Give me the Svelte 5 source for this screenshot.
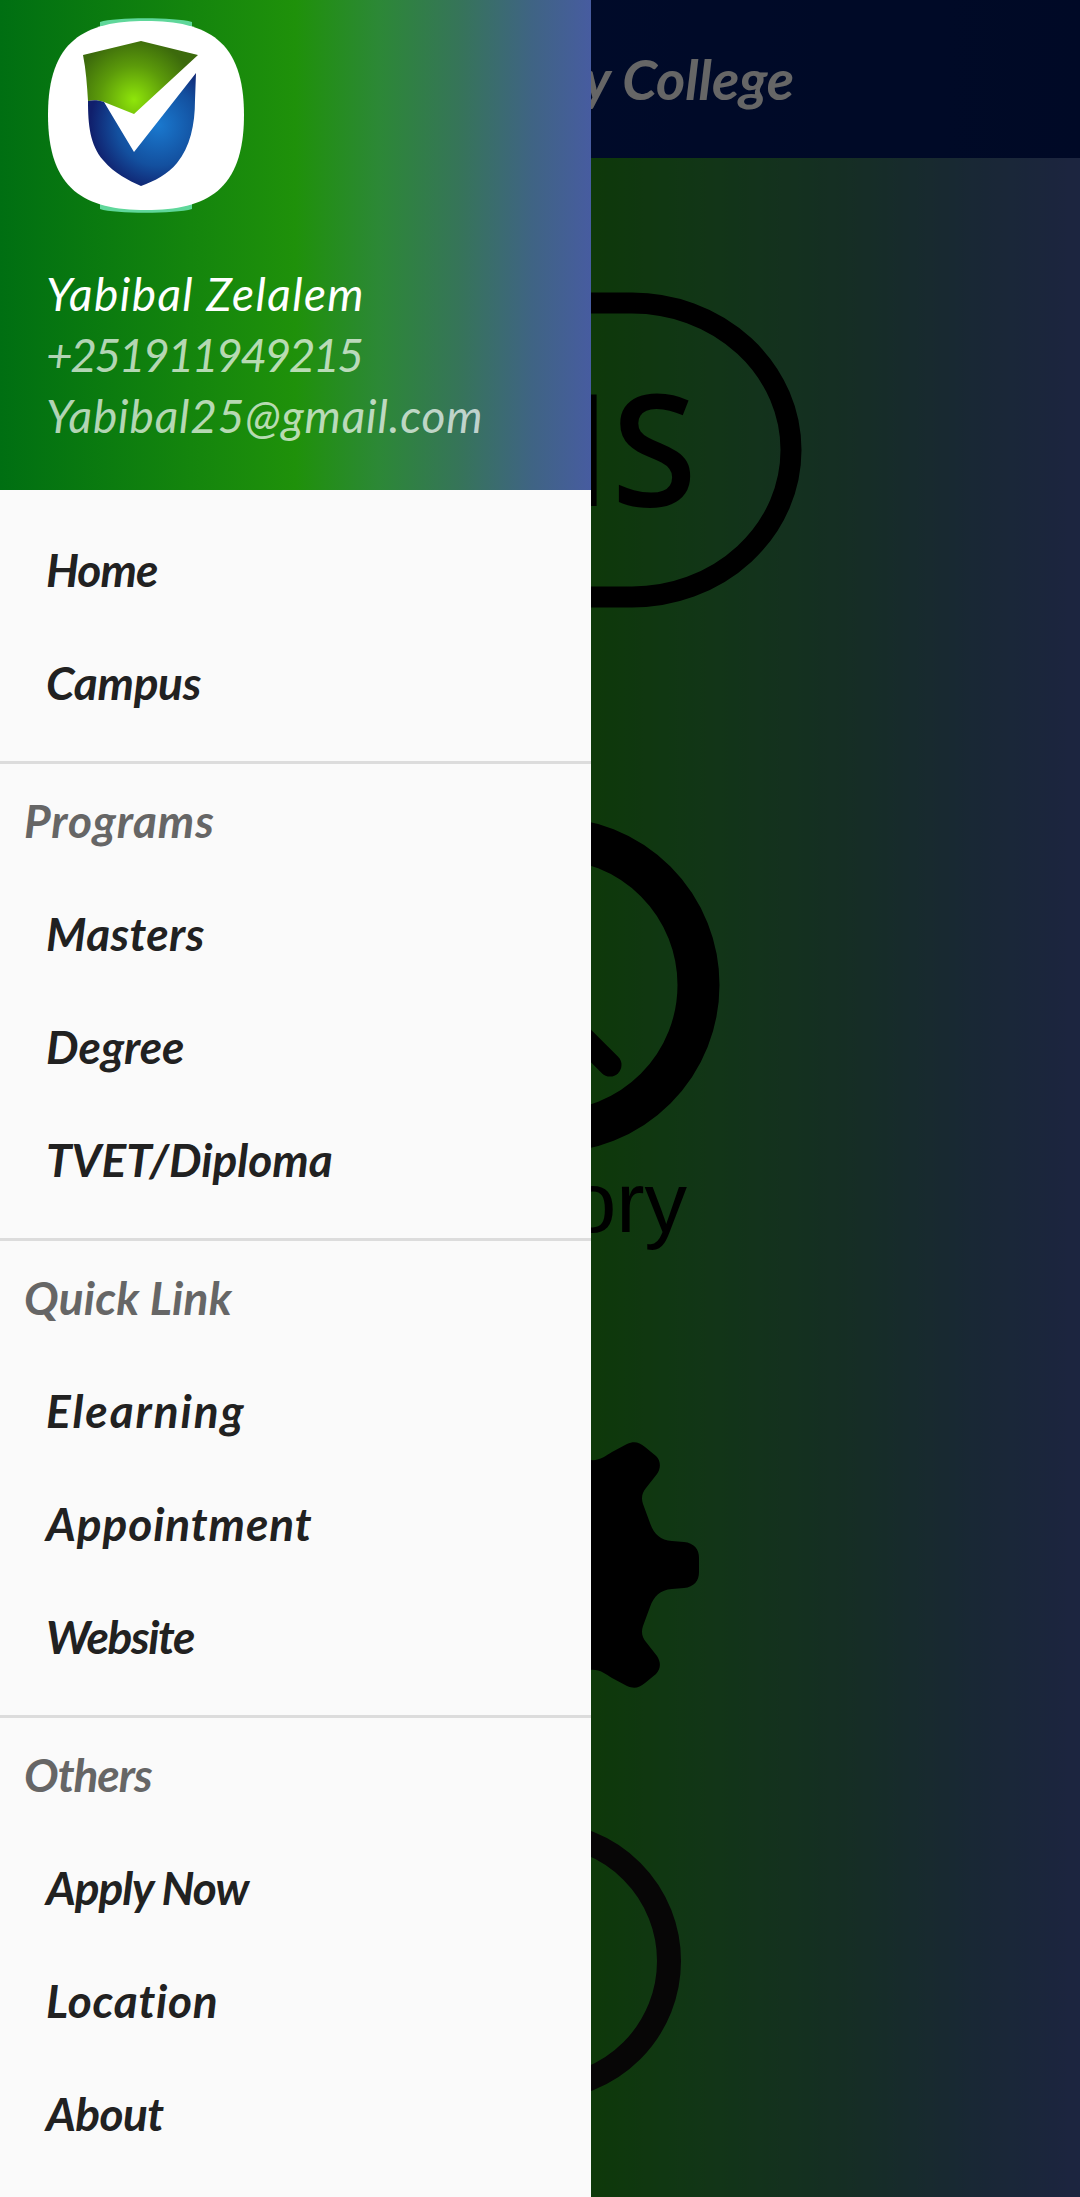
<script lang="ts">
  // ls: small tracking per label, so each one runs as wide as in the design
  const sections = [
    { title: "", titleLs: 0, items: [{ label: "Home", ls: -1 }, { label: "Campus", ls: -0.3 }] },
    {
      title: "Programs",
      titleLs: 0.9,
      items: [{ label: "Masters", ls: 0.4 }, { label: "Degree", ls: 0 }, { label: "TVET/Diploma", ls: 0 }],
    },
    {
      title: "Quick Link",
      titleLs: 0.2,
      items: [{ label: "Elearning", ls: 1.9 }, { label: "Appointment", ls: 0.9 }, { label: "Website", ls: -1.4 }],
    },
    {
      title: "Others",
      titleLs: -1,
      items: [{ label: "Apply Now", ls: -1.1 }, { label: "Location", ls: 0.75 }, { label: "About", ls: -0.6 }],
    },
  ];
</script>

<div class="screen">
  <div class="page">
    <header class="appbar"><span>Unity College</span></header>
    <main class="content">
      <svg class="tile t1" viewBox="240 280 600 340" width="600" height="340">
        <rect x="289" y="303" width="502" height="294" rx="159" ry="147" fill="none" stroke="#000" stroke-width="21" />
        <text x="697" y="506" text-anchor="end" class="tile-big">MS</text>
      </svg>
      <svg class="tile t2" viewBox="240 810 600 450" width="600" height="450">
        <circle cx="552" cy="985" r="146.5" fill="none" stroke="#000" stroke-width="42" />
        <path d="M552 1007 L 610 1065" stroke="#000" stroke-width="23" stroke-linecap="round" />
        <text x="687" y="1232" text-anchor="end" class="tile-label">History</text>
      </svg>
      <svg class="tile t3" viewBox="240 1430 600 270" width="600" height="270">
        <path
          fill="#000"
          d="M470 1460 L590 1460 C600 1461 605 1456 612 1452 L627 1444 C634 1441 639 1442 645 1447 L656 1456 C661 1461 661 1468 657 1474 L646 1488 C642 1493 641 1498 643 1504 L650 1523 C654 1534 660 1540 672 1541 L684 1542 C694 1543 699 1549 699 1558 L699 1572 C699 1581 694 1587 684 1588 L672 1589 C660 1590 654 1596 650 1607 L643 1626 C641 1632 642 1637 646 1642 L657 1656 C661 1662 661 1669 656 1674 L645 1683 C639 1688 634 1689 627 1686 L612 1678 C605 1674 600 1669 590 1670 L470 1670 Z"
        />
      </svg>
      <svg class="tile t4" viewBox="240 1815 600 290" width="600" height="290">
        <circle cx="542" cy="1961" r="127" fill="none" stroke="#120f10" stroke-width="24" />
      </svg>
    </main>
  </div>

  <div class="scrim"></div>

  <aside class="drawer">
    <section class="account">
      <svg class="logo" viewBox="48 17 196 197" width="196" height="197">
        <defs>
          <radialGradient id="greenShade" gradientUnits="userSpaceOnUse" cx="134" cy="100" r="62">
            <stop offset="0" stop-color="#8fe60a" />
            <stop offset="0.55" stop-color="#5c9b0a" />
            <stop offset="1" stop-color="#3c6a0c" />
          </radialGradient>
          <radialGradient id="blueShade" gradientUnits="userSpaceOnUse" cx="158" cy="125" r="68">
            <stop offset="0" stop-color="#1a79cf" />
            <stop offset="0.6" stop-color="#13509f" />
            <stop offset="1" stop-color="#101f6c" />
          </radialGradient>
        </defs>
        <path fill="#5fd79a" d="M100 22 C115 17 175 17 192 22 L192 209 C175 214 115 214 100 209 Z" />
        <path
          fill="#fff"
          d="M146 21 C207 21 244 40 244 115 C244 190 207 210 146 210 C85 210 48 190 48 115 C48 40 85 21 146 21 Z"
        />
        <path fill="url(#greenShade)" d="M83 55 L141 41 L198 55 L134 114 L104 102 C98 100 93 100 88 101 C87 85 86 70 83 55 Z" />
        <path
          fill="url(#blueShade)"
          d="M88 101 C88 125 90 145 103 160 C115 174 128 180 141 186 C155 181 168 174 177 163 C190 147 195 125 195 100 L196 73 L134 152 L104 102 C98 100 93 100 88 101 Z"
        />
      </svg>
      <div class="name">Yabibal Zelalem</div>
      <div class="phone">+251911949215</div>
      <div class="email">Yabibal25@gmail.com</div>
    </section>

    <nav class="menu">
      {#each sections as section, i (i)}
        <div class="group" class:first={i === 0}>
          {#if section.title}
            <div class="subheader" style="letter-spacing: {section.titleLs}px">{section.title}</div>
          {/if}
          {#each section.items as item (item.label)}
            <div class="item" style="letter-spacing: {item.ls}px">{item.label}</div>
          {/each}
        </div>
      {/each}
    </nav>
  </aside>
</div>

<style>
  :global(body) {
    margin: 0;
    background: #000;
  }
  .screen {
    position: relative;
    width: 1080px;
    height: 2197px;
    overflow: hidden;
    font-family: "Lato", sans-serif;
    font-style: italic;
  }
  .page {
    height: 100%;
    display: flex;
    flex-direction: column;
    background: linear-gradient(90deg, #006f12 0%, #1f910a 50%, #2c8836 64%, #36745a 78%, #3f6484 90%, #475ca0 100%);
  }
  .appbar {
    height: 158px;
    flex: none;
    display: flex;
    align-items: center;
    justify-content: flex-end;
    padding-right: 286px;
    background: linear-gradient(90deg, #002070 0%, #00185f 100%);
    color: #fff;
    font-size: 56px;
    font-weight: 700;
  }
  .appbar span {
    margin-top: -2px;
  }
  .content {
    display: flex;
    flex-direction: column;
    align-items: center;
    padding-top: 122px;
  }
  .tile {
    display: block;
    flex: none;
  }
  .t2 {
    margin-top: 190px;
  }
  .t3 {
    margin-top: 170px;
  }
  .t4 {
    margin-top: 115px;
  }
  .tile-big {
    font-family: "Open Sans", sans-serif;
    font-style: normal;
    font-weight: 600;
    font-size: 156px;
    fill: #000;
  }
  .tile-label {
    font-family: "Liberation Sans", sans-serif;
    font-style: normal;
    font-size: 85px;
    fill: #000;
  }
  .scrim {
    position: absolute;
    inset: 0;
    background: rgba(0, 0, 0, 0.6);
  }
  .drawer {
    position: absolute;
    left: 0;
    top: 0;
    width: 591px;
    height: 100%;
    background: #fafafa;
  }
  .account {
    height: 490px;
    box-sizing: border-box;
    padding: 17px 0 0 46px;
    background: linear-gradient(90deg, #006f12 0%, #1f910a 50%, #2c8836 64%, #36745a 78%, #3f6484 90%, #475ca0 100%);
    color: rgba(255, 255, 255, 0.7);
    font-size: 46px;
    line-height: 61px;
  }
  .logo {
    display: block;
    margin: 0 0 49px 2px;
  }
  .name {
    color: #fff;
    letter-spacing: 1.4px;
  }
  .phone {
    letter-spacing: -2.4px;
  }
  .email {
    letter-spacing: 0.85px;
  }
  .menu {
    color: #212121;
    font-size: 46px;
    font-weight: 700;
  }
  .group {
    border-top: 3px solid #dcdcdc;
    padding-bottom: 22px;
  }
  .group.first {
    border-top: none;
    padding-top: 23px;
  }
  .subheader {
    height: 113px;
    line-height: 113px;
    padding-left: 24px;
    color: #666;
  }
  .item {
    height: 113px;
    line-height: 113px;
    padding-left: 46px;
  }
</style>
